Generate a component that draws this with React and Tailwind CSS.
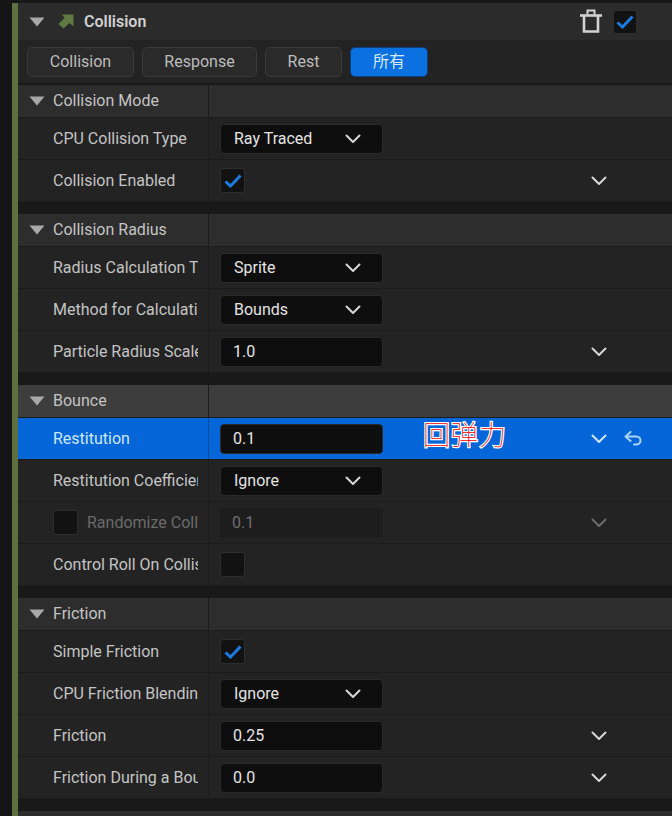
import React from 'react';

const FONT = { fontFamily: 'Roboto, "Noto Sans CJK SC", sans-serif' };

const sections = [
  {
    title: 'Collision Mode',
    tone: 'bg-[#2d2d2d]',
    rows: [
      { label: 'CPU Collision Type', kind: 'select', value: 'Ray Traced' },
      { label: 'Collision Enabled', kind: 'check', checked: true, chevron: true },
    ],
  },
  {
    title: 'Collision Radius',
    tone: 'bg-[#2d2d2d]',
    rows: [
      { label: 'Radius Calculation Type', kind: 'select', value: 'Sprite' },
      { label: 'Method for Calculating', kind: 'select', value: 'Bounds' },
      { label: 'Particle Radius Scale', kind: 'input', value: '1.0', chevron: true },
    ],
  },
  {
    title: 'Bounce',
    tone: 'bg-[#3d3d3d]',
    rows: [
      { label: 'Restitution', kind: 'input', value: '0.1', chevron: true, active: true },
      { label: 'Restitution Coefficient', kind: 'select', value: 'Ignore' },
      { label: 'Randomize Collision', kind: 'input', value: '0.1', chevron: true, disabled: true },
      { label: 'Control Roll On Collision', kind: 'check' },
    ],
  },
  {
    title: 'Friction',
    tone: 'bg-[#2d2d2d]',
    rows: [
      { label: 'Simple Friction', kind: 'check', checked: true },
      { label: 'CPU Friction Blending', kind: 'select', value: 'Ignore' },
      { label: 'Friction', kind: 'input', value: '0.25', chevron: true },
      { label: 'Friction During a Bounce', kind: 'input', value: '0.0', chevron: true },
    ],
  },
];

function Triangle() {
  return (
    <svg width="16" height="10" viewBox="0 0 16 10" className="shrink-0">
      <path d="M0.5 0.5H15.5L8 9.5Z" fill="#a8a8a8" />
    </svg>
  );
}

function Chevron({ color = '#d6d6d6' }) {
  return (
    <svg width="16" height="10" viewBox="0 0 16 10" fill="none" className="shrink-0">
      <path d="M1.5 1.5L8 8L14.5 1.5" stroke={color} strokeWidth="2" strokeLinecap="round" strokeLinejoin="round" />
    </svg>
  );
}

function Checkbox({ checked, size = 'w-[25px] h-[25px]', dim }) {
  return (
    <div className={`${size} rounded-[3px] bg-[#121212] border ${dim ? 'border-[#2c2c2c]' : 'border-[#2e2e2e]'} flex items-center justify-center shrink-0`}>
      {checked && (
        <svg width="18" height="14" viewBox="0 0 18 14" fill="none">
          <path d="M1.5 7.5L6.5 12L16.5 1.5" stroke="#1c7ae0" strokeWidth="3" />
        </svg>
      )}
    </div>
  );
}

function Field({ row }) {
  if (row.kind === 'check') return <Checkbox checked={row.checked} />;
  const isSelect = row.kind === 'select';
  const box = row.disabled
    ? 'bg-[#1d1d1d] text-[#6e6e6e]'
    : 'bg-[#0e0e0e] text-[#e4e4e4]';
  return (
    <div className={`w-[163px] h-[30px] rounded-[4px] ${box} ${row.disabled ? '' : 'border border-[#2a2a2a]'} ${isSelect ? 'pl-[13px]' : 'pl-[12px]'} pr-[21px] flex items-center justify-between text-[16px]`}>
      <span>{row.value}</span>
      {isSelect && <Chevron />}
    </div>
  );
}

function Row({ row }) {
  const bg = row.active ? 'bg-[#0466d8]' : 'bg-[#232323]';
  const labelColor = row.active ? 'text-[#cfe6ff]' : row.disabled ? 'text-[#6a6a6a]' : 'text-[#c4c4c4]';
  return (
    <div className={`h-[42px] flex border-b border-[#1c1c1c] ${bg}`}>
      <div className={`w-[191px] shrink-0 pl-[35px] pr-[10px] flex items-center gap-[9px] border-r ${row.active ? 'border-[#0a4c9c]' : 'border-[#1c1c1c]'} ${labelColor}`}>
        {row.disabled && <Checkbox size="w-[25px] h-[25px]" dim />}
        <span className="whitespace-nowrap overflow-hidden text-[16px]">{row.label}</span>
      </div>
      <div className="flex-1 pl-[11px] pr-[65px] flex items-center">
        <Field row={row} />
        {row.chevron && (
          <div className="ml-auto flex items-center">
            <Chevron color={row.disabled ? '#6c6c6c' : row.active ? '#cfe6ff' : '#d6d6d6'} />
          </div>
        )}
        {row.active && (
          <svg width="18" height="15" viewBox="0 0 18 15" fill="none" className="absolute left-[624px] top-[431px]">
            <path d="M6.5 1L1.5 5.5L6.5 10" stroke="#a9d4ff" strokeWidth="2" strokeLinecap="round" strokeLinejoin="round" />
            <path d="M2 5.5H12C15 5.5 16.5 7.5 16.5 9.5C16.5 11.5 15 13.5 12 13.5H10" stroke="#a9d4ff" strokeWidth="2" strokeLinecap="round" />
          </svg>
        )}
      </div>
    </div>
  );
}

function Section({ section }) {
  return (
    <div className="mb-[12px]">
      <div className={`h-[33px] flex border-b border-[#1c1c1c] ${section.tone}`}>
        <div className="w-[191px] shrink-0 pl-[11px] flex items-center gap-[8px] border-r border-[#1c1c1c] text-[#c4c4c4] text-[16px]">
          <Triangle />
          <span>{section.title}</span>
        </div>
      </div>
      {section.rows.map((row) => (
        <Row key={row.label} row={row} />
      ))}
    </div>
  );
}

const tabs = [
  { label: 'Collision', w: 'w-[107px]' },
  { label: 'Response', w: 'w-[115px]' },
  { label: 'Rest', w: 'w-[77px]' },
];

export default function App() {
  return (
    <div className="w-[672px] h-[816px] overflow-hidden flex bg-[#141414] relative" style={FONT}>
      <div className="w-[12px] shrink-0 bg-[#151515]" />
      <div className="w-[6px] shrink-0 bg-[#5e7040] mt-[3px]" />
      <div className="flex-1 min-w-0 bg-[#191919] pt-[3px]">
        {/* header */}
        <div className="h-[37px] bg-[#2b2b2b] pl-[11px] pr-[35px] flex items-center">
          <Triangle />
          <svg width="16" height="15" viewBox="0 0 16 15" className="ml-[13px]">
            <path d="M4 0.5H15.5V12.5L11.5 9L5.5 14.5L0.5 10L6.5 4Z" fill="#5f7a40" />
          </svg>
          <span className="ml-[10px] text-[16px] font-semibold text-[#d0d0d0]">Collision</span>
          <svg width="22" height="24" viewBox="0 0 22 24" fill="none" className="ml-auto mr-[11px] -mt-[1px]">
            <path d="M0 6.5H22" stroke="#d2d2d2" strokeWidth="2.6" />
            <path d="M7.5 5.5V1.5H14.5V5.5" stroke="#d2d2d2" strokeWidth="2" />
            <path d="M4 7V22.5H18V7" stroke="#d2d2d2" strokeWidth="2.6" />
          </svg>
          <Checkbox checked size="w-[24px] h-[24px]" />
        </div>
        {/* filter tabs */}
        <div className="h-[44px] bg-[#232323] border-b border-[#1a1a1a] pl-[9px] flex items-center gap-[8px]">
          {tabs.map((tab) => (
            <div key={tab.label} className={`${tab.w} h-[30px] rounded-[5px] bg-[#2a2a2a] border border-[#3a3a3a] flex items-center justify-center text-[16px] text-[#bdbdbd]`}>
              {tab.label}
            </div>
          ))}
          <div className="w-[78px] h-[30px] rounded-[5px] bg-[#0b70e0] border border-[#0c3f7c] flex items-center justify-center text-[16px] text-[#d5eaff]">
            所有
          </div>
        </div>
        <div className="h-[1px]" />
        {sections.map((section) => (
          <Section key={section.title} section={section} />
        ))}
        <div className="h-[10px] bg-[#2d2d2d]" />
      </div>
      {/* annotation over the Restitution row */}
      <div
        className="absolute left-[423px] top-[418px] text-[27px] leading-[32px] tracking-[1px] text-[#f00000] font-thin [-webkit-text-stroke:2.5px_white] [paint-order:stroke_fill]"
        style={{ fontFamily: '"Noto Sans CJK SC", sans-serif' }}
      >
        回弹力
      </div>
    </div>
  );
}
